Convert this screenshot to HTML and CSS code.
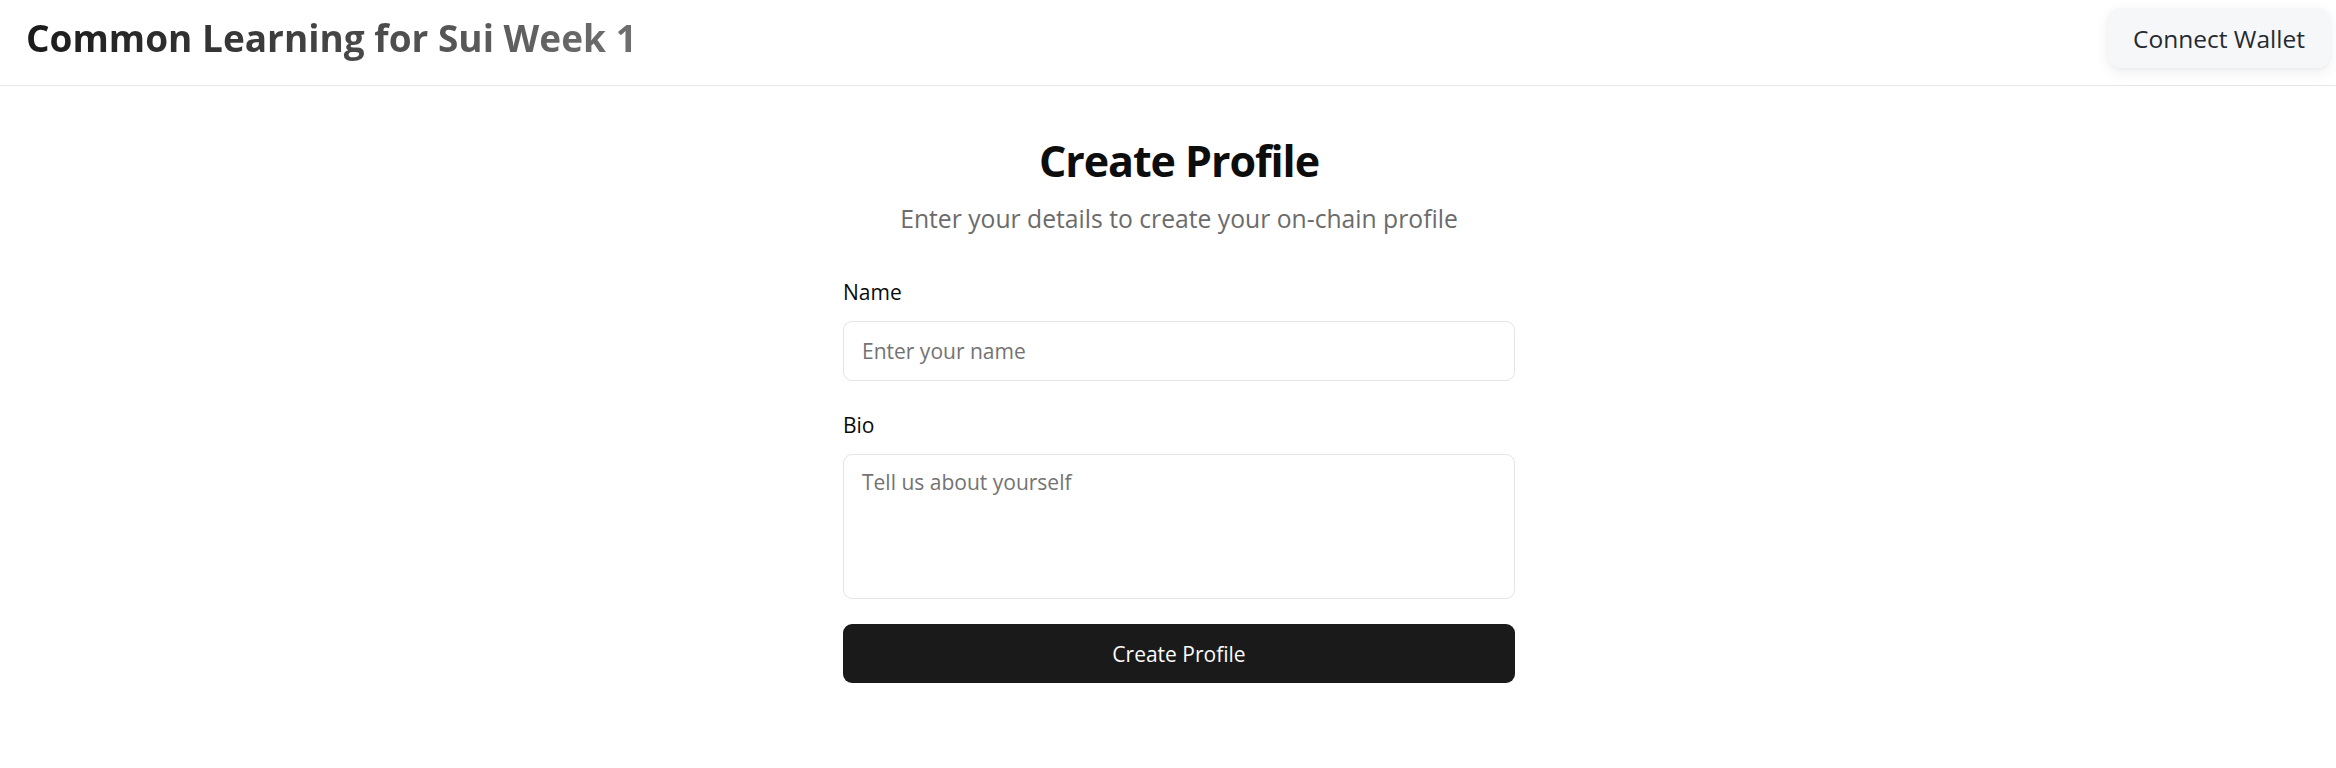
FILE: index.html
```html
<!DOCTYPE html>
<html lang="en">
<head>
<meta charset="utf-8">
<title>Common Learning for Sui Week 1</title>
<link rel="stylesheet" href="styles.css">
</head>
<body>
<header class="topbar">
  <h1 class="brand">Common Learning for Sui Week 1</h1>
  <button class="wallet-btn" type="button">Connect Wallet</button>
</header>
<main class="main">
  <section class="panel">
    <h2 class="title">Create Profile</h2>
    <p class="subtitle">Enter your details to create your on-chain profile</p>
    <form class="form">
      <div class="field">
        <label class="label" for="name">Name</label>
        <input class="input" id="name" type="text" placeholder="Enter your name">
      </div>
      <div class="field">
        <label class="label" for="bio">Bio</label>
        <textarea class="textarea" id="bio" placeholder="Tell us about yourself"></textarea>
      </div>
      <button class="submit" type="button">Create Profile</button>
    </form>
  </section>
</main>
</body>
</html>
```

FILE: styles.css
```css
* { box-sizing: border-box; }
html, body { margin: 0; padding: 0; background: #ffffff; }
body {
  font-family: "Open Sans", "Noto Sans", "Liberation Sans", sans-serif;
  color: #0a0a0a;
}
.topbar {
  height: 86px;
  display: flex;
  align-items: flex-start;
  justify-content: space-between;
  padding: 8px 6px 0 26px;
  border-bottom: 1px solid #e6e6e6;
}
.brand {
  margin: 0;
  height: 60px;
  line-height: 60px;
  font-size: 37px;
  font-weight: 700;
  background: linear-gradient(to right, #1a1a1a, #707070);
  -webkit-background-clip: text;
  background-clip: text;
  color: transparent;
}
.wallet-btn {
  width: 222px;
  height: 60px;
  border: none;
  border-radius: 12px;
  background: #f6f7f9;
  box-shadow: 0 4px 14px rgba(0, 0, 0, 0.07), 0 1px 3px rgba(0, 0, 0, 0.04);
  font-family: inherit;
  font-size: 24.5px;
  font-weight: 400;
  color: #262a31;
  padding: 0;
}
.main {
  display: flex;
  justify-content: center;
  padding: 51px 0 0 22px;
}
.panel {
  width: 672px;
  display: flex;
  flex-direction: column;
  align-items: center;
}
.title {
  margin: 0;
  font-size: 43px;
  line-height: 48px;
  font-weight: 700;
  letter-spacing: -0.025em;
  color: #0d0d0d;
}
.subtitle {
  margin: 16px 0 0;
  font-size: 24.7px;
  line-height: 36px;
  color: #6b6b6b;
}
.form {
  width: 100%;
  margin-top: 40px;
  display: flex;
  flex-direction: column;
}
.field {
  display: flex;
  flex-direction: column;
  gap: 14px;
  margin-bottom: 29px;
}
.field + .field { margin-bottom: 25px; }
.label {
  font-size: 21px;
  line-height: 30px;
  font-weight: 500;
  color: #0a0a0a;
}
.input, .textarea {
  width: 100%;
  border: 1.5px solid #e5e5e5;
  border-radius: 9px;
  background: #ffffff;
  font-family: inherit;
  font-size: 21px;
  color: #0a0a0a;
  padding: 0 18px;
  outline: none;
}
.input { height: 60px; }
.textarea {
  height: 145px;
  padding-top: 12px;
  resize: none;
  line-height: 30px;
}
.input::placeholder, .textarea::placeholder { color: #737373; }
.submit {
  width: 100%;
  height: 59px;
  border: none;
  border-radius: 9px;
  background: #1a1a1a;
  color: #fafafa;
  font-family: inherit;
  font-size: 21px;
  font-weight: 500;
}
```
